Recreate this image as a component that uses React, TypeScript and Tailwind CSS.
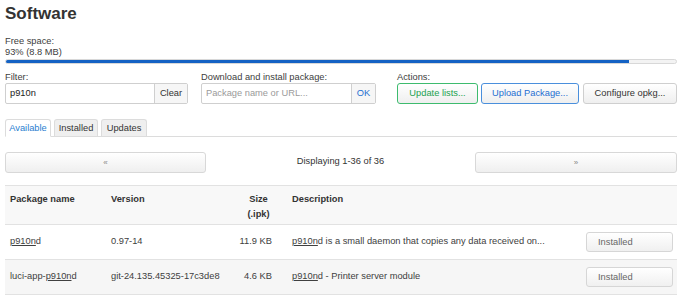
import React from 'react'

const btn = 'h-[21px] rounded-[3px] border bg-gradient-to-b from-white to-[#efefef] leading-[19px] text-center'

function Hl({ pre = '', post = '' }: { pre?: string; post?: string }) {
  return (
    <span>
      {pre}
      <span className="underline underline-offset-[1px]">p910n</span>
      {post}
    </span>
  )
}

const rows = [
  {
    name: <Hl post="d" />,
    version: '0.97-14',
    size: '11.9 KB',
    desc: <Hl post="d is a small daemon that copies any data received on..." />,
  },
  {
    name: <Hl pre="luci-app-" post="d" />,
    version: 'git-24.135.45325-17c3de8',
    size: '4.6 KB',
    desc: <Hl post="d - Printer server module" />,
  },
]

export default function App() {
  return (
    <div className="w-[690px] h-[297px] overflow-hidden bg-white px-[5px] text-[9.3px] text-[#404040] font-['Liberation_Sans',Arial,sans-serif]">
      <h2 className="mt-[4px] h-[20px] leading-[20px] text-[17px] font-bold text-[#333]">Software</h2>

      <div className="mt-[12px] leading-[11px]">
        <div>Free space:</div>
        <div>93% (8.8 MB)</div>
      </div>
      <div className="mt-[1px] h-[5px] w-[672px] rounded-full border border-[#d8d8d8] bg-[#f3f3f3] overflow-hidden">
        <div className="h-full w-[93%] bg-[#1462c4]" />
      </div>

      {/* filtro / descarga / acciones */}
      <div className="mt-[8px] flex w-[672px]">
        <div className="w-[183px]">
          <div className="h-[11px] leading-[11px]">Filter:</div>
          <div className="flex h-[21px] rounded-[2px] border border-[#cfcfcf]">
            <div className="flex-1 pl-[4px] leading-[19px] text-[#222]">p910n</div>
            <div className="w-[33px] border-l border-[#cfcfcf] bg-[#f6f6f6] text-center leading-[19px] text-[#333]">Clear</div>
          </div>
        </div>
        <div className="ml-[13px] w-[175px]">
          <div className="h-[11px] leading-[11px]">Download and install package:</div>
          <div className="flex h-[21px] rounded-[2px] border border-[#cfcfcf]">
            <div className="flex-1 pl-[4px] leading-[19px] text-[#9a9a9a]">Package name or URL...</div>
            <div className="w-[24px] border-l border-[#cfcfcf] bg-[#f6f6f6] text-center leading-[19px] text-[#1e6fd1]">OK</div>
          </div>
        </div>
        <div className="ml-[21px]">
          <div className="h-[11px] leading-[11px]">Actions:</div>
          <div className="flex gap-[3px]">
            <div className={`${btn} w-[81px] border-[#3dbb6e] text-[#22a150]`}>Update lists...</div>
            <div className={`${btn} w-[98px] border-[#4a8fdc] text-[#1e6fd1]`}>Upload Package...</div>
            <div className={`${btn} ml-[1px] w-[94px] border-[#cfcfcf] text-[#333]`}>Configure opkg...</div>
          </div>
        </div>
      </div>

      {/* pestañas */}
      <div className="mt-[16px] flex h-[17px] w-[672px] items-end gap-[3px] border-b border-[#dcdcdc]">
        <div className="-mb-px h-[18px] w-[46px] rounded-t-[3px] border border-b-white border-[#dcdcdc] bg-white text-center leading-[16px] text-[#2a7ed0]">Available</div>
        <div className="h-[17px] w-[44px] rounded-t-[3px] border border-b-0 border-[#dcdcdc] bg-[#efefef] text-center leading-[16px] text-[#333]">Installed</div>
        <div className="h-[17px] w-[46px] rounded-t-[3px] border border-b-0 border-[#dcdcdc] bg-[#efefef] text-center leading-[16px] text-[#333]">Updates</div>
      </div>

      {/* paginación */}
      <div className="mt-[15px] flex h-[20px] w-[672px] items-center">
        <div className={`${btn} h-[20px] w-[201px] border-[#d8d8d8] text-[#888] text-[8px]`}>«</div>
        <div className="flex-1 text-center text-[#333]">Displaying 1-36 of 36</div>
        <div className={`${btn} h-[20px] w-[202px] border-[#d8d8d8] text-[#888] text-[8px]`}>»</div>
      </div>

      {/* tabla */}
      <div className="mt-[13px] w-[672px] border-t border-[#e2e2e2]">
        <div className="grid h-[39px] grid-cols-[101px_129px_42px_1fr_96px] border-b border-[#e2e2e2] bg-[#f8f8f8] pt-[6px] font-bold leading-[14.5px] text-[#333]">
          <div className="pl-[5px]">Package name</div>
          <div className="pl-[5px]">Version</div>
          <div className="pl-[5px] text-center">
            <div>Size</div>
            <div>(.ipk)</div>
          </div>
          <div className="pl-[15px]">Description</div>
          <div />
        </div>
        {rows.map((r, i) => (
          <div
            key={i}
            className={`grid h-[35px] grid-cols-[101px_129px_42px_1fr_96px] items-center border-b border-[#e2e2e2] ${i % 2 ? 'bg-[#f6f6f6]' : 'bg-white'}`}
          >
            <div className="pl-[5px]">{r.name}</div>
            <div className="pl-[5px]">{r.version}</div>
            <div className="pr-[5px] text-right">{r.size}</div>
            <div className="pl-[15px]">{r.desc}</div>
            <div className="pl-[5px]">
              <div className="h-[20px] w-[87px] rounded-[3px] border border-[#d6d6d6] bg-gradient-to-b from-white to-[#f0f0f0] pl-[11px] leading-[18px] text-[#666]">Installed</div>
            </div>
          </div>
        ))}
      </div>
    </div>
  )
}
